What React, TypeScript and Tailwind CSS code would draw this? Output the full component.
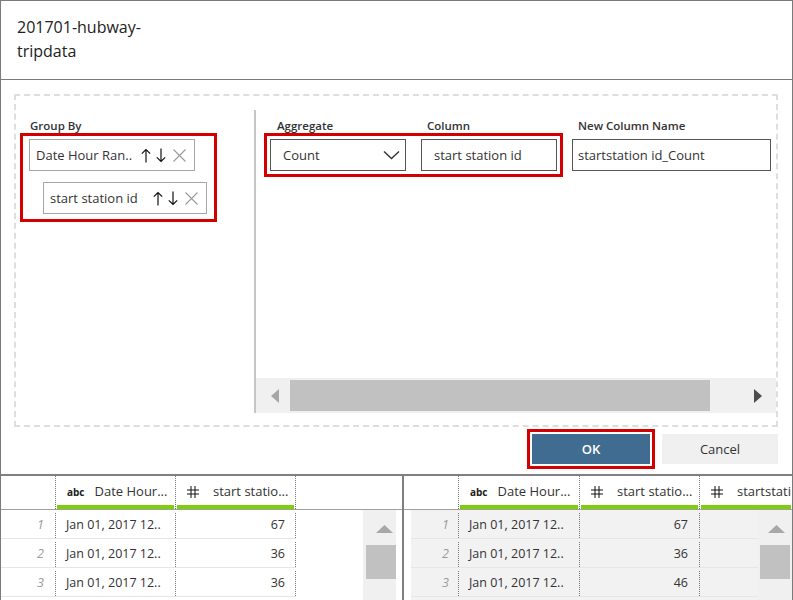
import React from "react";

const UpArrow = () => (
  <svg width="10" height="15" viewBox="0 0 10 15" fill="none" stroke="#111" strokeWidth="1.2">
    <path d="M5 1.5V14.5M0.8 5.7L5 1.5L9.2 5.7" />
  </svg>
);

const DownArrow = () => (
  <svg width="10" height="15" viewBox="0 0 10 15" fill="none" stroke="#111" strokeWidth="1.2">
    <path d="M5 0.5V13.5M0.8 9.3L5 13.5L9.2 9.3" />
  </svg>
);

const CloseX = () => (
  <svg width="13" height="13" viewBox="0 0 13 13" fill="none" stroke="#9a9a9a" strokeWidth="1.1">
    <path d="M0.5 0.5L12.5 12.5M12.5 0.5L0.5 12.5" />
  </svg>
);

const Hash = () => (
  <svg width="12" height="12" viewBox="0 0 12 12" fill="none" stroke="#111" strokeWidth="1">
    <path d="M4 0V12M8 0V12M0 4H12M0 8H12" />
  </svg>
);

const ScrollUp = () => (
  <svg width="17" height="8" viewBox="0 0 17 8">
    <polygon points="0,8 8.5,0 17,8" fill="#a8a8a8" />
  </svg>
);

type GroupItemProps = { label: string; className: string };

const GroupItem = ({ label, className }: GroupItemProps) => {
  return (
    <div
      className={
        "flex items-center h-[32px] border border-[#a6a6a6] pl-[6px] pr-[8px] text-[13px] text-[#333] " +
        className
      }
    >
      <span className="flex-1 whitespace-nowrap pt-[1px]">{label}</span>
      <div className="flex items-center">
        <UpArrow />
        <span className="ml-[5px]">
          <DownArrow />
        </span>
        <span className="ml-[7px]">
          <CloseX />
        </span>
      </div>
    </div>
  );
};

const Dialog = () => {
  return (
    <div className="h-[473px] flex flex-col">
      {/* タイトル */}
      <div className="h-[79px] border-b border-[#7a7a7a] pl-[16px] pt-[14px] text-[16px] leading-[24px] text-[#222]">
        201701-hubway-
        <br />
        tripdata
      </div>

      <div className="ml-[13px] mt-[14px] w-[764px] h-[333px] border-2 border-dashed border-[#dedede] flex">
        {/* Group By */}
        <div className="w-[238px] pt-[23px]">
          <div className="pl-[14px] text-[11.5px] leading-[14px] font-semibold text-[#333]">Group By</div>
          <div className="ml-[4px] w-[197px] h-[89px] border-[3px] border-[#d40000] pt-[3px]">
            <GroupItem label="Date Hour Ran.." className="ml-[6px] w-[166px]" />
            <GroupItem label="start station id" className="ml-[20px] mt-[11px] w-[164px]" />
          </div>
        </div>

        <div className="w-[2px] h-[303px] mt-[14px] bg-[#c6c6c6]" />

        {/* Aggregate */}
        <div className="flex-1 h-[317px] flex flex-col">
          <div className="flex pt-[23px] pl-[21px] text-[11.5px] leading-[14px] font-semibold text-[#333]">
            <div className="w-[150px]">Aggregate</div>
            <div className="w-[151px]">Column</div>
            <div>New Column Name</div>
          </div>
          <div className="flex items-start">
            <div className="ml-[8px] border-[3px] border-[#d40000] p-[3px] flex gap-[15px]">
              <div className="w-[136px] h-[32px] border border-[#555] flex items-center justify-between pl-[12px] pr-[5px] text-[13px] text-[#333]">
                <span className="pt-[1px]">Count</span>
                <svg width="17" height="10" viewBox="0 0 17 10" fill="none" stroke="#333" strokeWidth="1.4">
                  <polyline points="1,1.5 8.5,8.5 16,1.5" />
                </svg>
              </div>
              <div className="w-[136px] h-[32px] border border-[#555] flex items-center pl-[12px] pt-[1px] text-[13px] text-[#333]">
                start station id
              </div>
            </div>
            <div className="ml-[9px] mt-[6px] w-[199px] h-[32px] border border-[#555] flex items-center pl-[5px] pt-[1px] text-[13px] text-[#333]">
              startstation id_Count
            </div>
          </div>

          {/* スクロールバー */}
          <div className="mt-auto h-[35px] bg-[#f0f0f0] flex items-center">
            <div className="w-[34px] flex justify-center pl-[4px]">
              <svg width="8" height="14" viewBox="0 0 8 14">
                <polygon points="8,0 0,7 8,14" fill="#a6a6a6" />
              </svg>
            </div>
            <div className="w-[420px] h-[31px] bg-[#c1c1c1]" />
            <div className="flex-1 flex justify-end pr-[14px]">
              <svg width="8" height="14" viewBox="0 0 8 14">
                <polygon points="0,0 8,7 0,14" fill="#4d4d4d" />
              </svg>
            </div>
          </div>
        </div>
      </div>

      <div className="flex justify-end items-center pr-[14px] mt-[2px] gap-[7px]">
        <div className="border-[3px] border-[#d40000] p-[2px]">
          <div className="w-[118px] h-[30px] pt-[2px] bg-[#416c91] text-white font-semibold text-[13px] flex items-center justify-center">
            OK
          </div>
        </div>
        <div className="w-[116px] h-[30px] pt-[2px] bg-[#f0f0f0] text-[#333] text-[13px] flex items-center justify-center">
          Cancel
        </div>
      </div>
    </div>
  );
};

type HeadProps = { type: "abc" | "num"; label: string; width: string };

const HeadCell = ({ type, label, width }: HeadProps) => {
  return (
    <div className={"h-full flex flex-col border-r border-dotted border-[#777] " + width}>
      <div className="h-[29px] flex items-center pl-[11px] pt-[3px] text-[13px] text-[#333] whitespace-nowrap overflow-hidden">
        {type === "abc" ? (
          <span className="text-[10px] font-bold text-[#222] mr-[10px]">abc</span>
        ) : (
          <span className="mr-[14px] flex">
            <Hash />
          </span>
        )}
        {label}
      </div>
      <div className="h-[4px] mx-[1px] bg-[#7dcf0c]" />
    </div>
  );
};

const rowsLeft = [
  { n: "1", date: "Jan 01, 2017 12..", v: "67" },
  { n: "2", date: "Jan 01, 2017 12..", v: "36" },
  { n: "3", date: "Jan 01, 2017 12..", v: "36" },
  { n: "", date: "", v: "" },
];

const rowsRight = [
  { n: "1", date: "Jan 01, 2017 12..", v: "67" },
  { n: "2", date: "Jan 01, 2017 12..", v: "36" },
  { n: "3", date: "Jan 01, 2017 12..", v: "46" },
  { n: "", date: "", v: "" },
];

const LeftGrid = () => {
  return (
    <div className="w-[401px] h-full flex flex-col">
      <div className="h-[34px] flex border-b border-[#a0a0a0]">
        <div className="w-[55px] h-full border-r border-dotted border-[#777]" />
        <HeadCell type="abc" label="Date Hour..." width="w-[120px]" />
        <HeadCell type="num" label="start statio..." width="w-[120px]" />
      </div>
      <div className="flex flex-1 overflow-hidden">
        <div className="w-[295px]">
          {rowsLeft.map((r, i) => (
            <div key={i} className="h-[29px] flex border-b border-[#e6e6e6] pt-[3px] text-[12.5px] text-[#333]">
              <div className="w-[55px] border-r border-dotted border-[#777] flex items-center justify-end pr-[11px] italic text-[#9a9a9a]">
                {r.n}
              </div>
              <div className="w-[120px] border-r border-dotted border-[#777] flex items-center pl-[10px] whitespace-nowrap">
                {r.date}
              </div>
              <div className="w-[120px] border-r border-dotted border-[#777] flex items-center justify-end pr-[10px]">
                {r.v}
              </div>
            </div>
          ))}
        </div>
        <div className="flex-1" />
        <div className="w-[33px] bg-[#f0f0f0] mr-[6px] flex flex-col items-center pt-[15px]">
          <span className="flex ml-[9px]">
            <ScrollUp />
          </span>
          <div className="mt-[12px] ml-[3px] w-[30px] h-[34px] bg-[#c1c1c1]" />
        </div>
      </div>
    </div>
  );
};

const RightGrid = () => {
  return (
    <div className="flex-1 h-full flex flex-col overflow-hidden">
      <div className="h-[34px] flex border-b border-[#a0a0a0]">
        <div className="w-[55px] h-full border-r border-dotted border-[#777]" />
        <HeadCell type="abc" label="Date Hour..." width="w-[121px]" />
        <HeadCell type="num" label="start statio..." width="w-[120px]" />
        <div className="flex-1 h-full flex flex-col overflow-hidden">
          <div className="h-[29px] flex items-center pl-[11px] pt-[3px] text-[13px] text-[#333] whitespace-nowrap">
            <span className="mr-[14px] flex">
              <Hash />
            </span>
            startstati
          </div>
          <div className="h-[4px] ml-[1px] mr-[1px] bg-[#7dcf0c]" />
        </div>
      </div>
      <div className="flex flex-1 overflow-hidden pl-[7px]">
        <div className="w-[347px] bg-[#f2f2f2]">
          {rowsRight.map((r, i) => (
            <div key={i} className="h-[29px] flex border-b border-[#e6e6e6] pt-[3px] text-[12.5px] text-[#333]">
              <div className="w-[48px] border-r border-dotted border-[#777] flex items-center justify-end pr-[9px] italic text-[#9a9a9a]">
                {r.n}
              </div>
              <div className="w-[121px] border-r border-dotted border-[#777] flex items-center pl-[10px] whitespace-nowrap">
                {r.date}
              </div>
              <div className="w-[120px] border-r border-dotted border-[#777] flex items-center justify-end pr-[11px]">
                {r.v}
              </div>
            </div>
          ))}
        </div>
        <div className="flex-1 bg-[#f0f0f0] flex flex-col items-center pt-[15px]">
          <span className="flex ml-[2px]">
            <ScrollUp />
          </span>
          <div className="mt-[12px] w-[30px] h-[34px] bg-[#c1c1c1]" />
        </div>
      </div>
    </div>
  );
};

export default function App() {
  return (
    <div className="w-[793px] h-[600px] overflow-hidden bg-white flex flex-col border-x border-t border-[#7a7a7a] font-['Segoe_UI','Open_Sans',sans-serif]">
      <Dialog />
      <div className="flex-1 flex border-t-2 border-[#808080] overflow-hidden">
        <LeftGrid />
        <div className="w-[2px] bg-[#808080]" />
        <RightGrid />
      </div>
    </div>
  );
}
